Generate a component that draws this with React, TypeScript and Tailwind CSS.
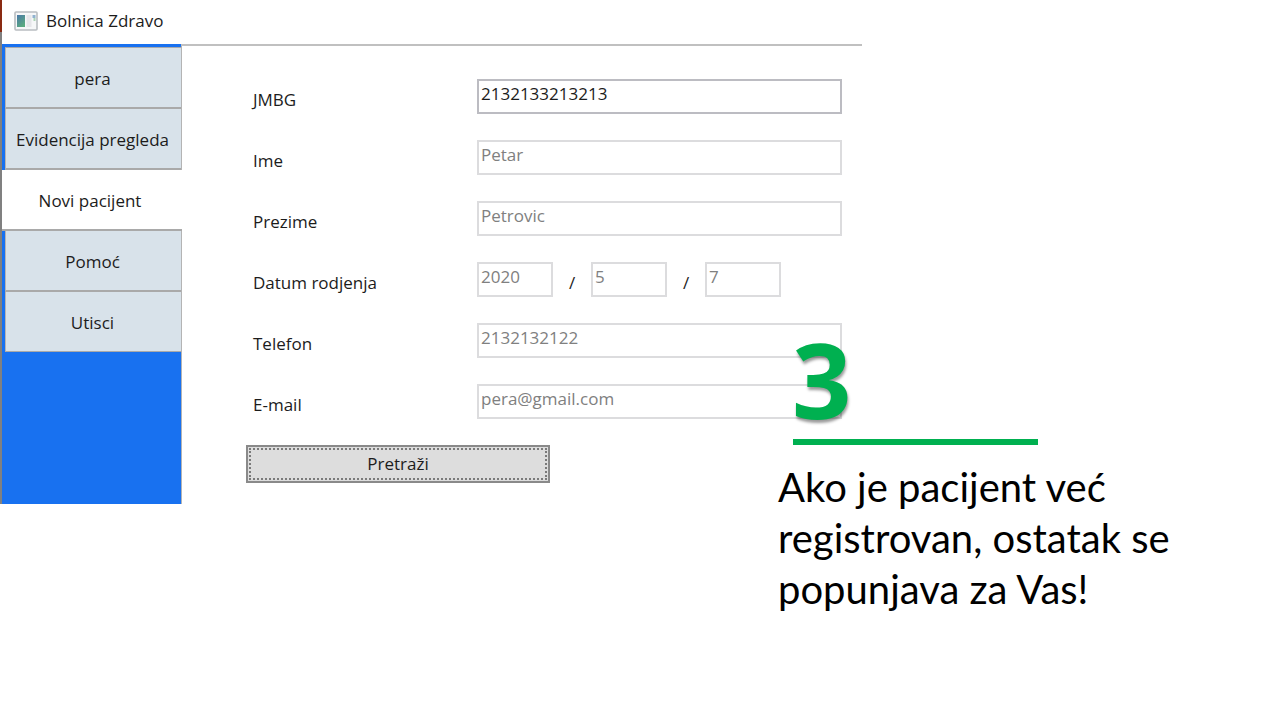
import type { ReactNode } from "react";
import clsx from "clsx";

const tabs = ["pera", "Evidencija pregleda", "Novi pacijent", "Pomoć", "Utisci"];
const activeTab = "Novi pacijent";

function WindowIcon() {
  return (
    <svg width="24" height="20" viewBox="0 0 24 20" aria-hidden="true">
      <defs>
        <linearGradient id="pane" x1="0" y1="0" x2="0.6" y2="1">
          <stop offset="0" stopColor="#4a78a8" />
          <stop offset="1" stopColor="#5aaa80" />
        </linearGradient>
      </defs>
      <rect x="1" y="1" width="22" height="18" rx="1" fill="#f6f7f8" stroke="#b9bdc1" strokeWidth="1.6" />
      <rect x="3" y="4" width="8" height="12" fill="url(#pane)" />
      <rect x="12.500" y="4" width="5" height="12" fill="#e6e6ea" />
      <rect x="18.500" y="4" width="3" height="3" fill="#8fb2cf" />
      <rect x="19.500" y="7" width="2" height="3" fill="#a9d3b4" />
    </svg>
  );
}

function Sidebar() {
  return (
    <nav className="flex w-[180px] shrink-0 flex-col border-r border-[#b4b4b4] bg-[#1871f0] pt-px">
      {tabs.map((tab) => (
        <button
          key={tab}
          type="button"
          className={clsx(
            "whitespace-nowrap border-[#a9a9a9] pt-[3px] leading-6 text-[#1c1c1c]",
            tab === activeTab ? "-mr-px bg-white pr-1" : "ml-[3px] border-l border-l-[#b9b5b0] bg-[#d8e2ea] pr-[2px]",
            tab === "pera" ? "h-[62px] border-t" : tab === "Utisci" ? "h-[60px]" : "h-[61px]",
            tab === "Utisci" ? "border-b" : "border-b-2",
          )}
        >
          {tab}
        </button>
      ))}
    </nav>
  );
}

function Row({ label, htmlFor, children }: { label: string; htmlFor: string; children: ReactNode }) {
  return (
    <div className="flex">
      <label htmlFor={htmlFor} className="w-[231px] shrink-0 pl-[7px] pt-[9px] leading-6">
        {label}
      </label>
      {children}
    </div>
  );
}

function TextBox({ id, value, label, disabled = true, small = false }: {
  id: string;
  value: string;
  label?: string;
  disabled?: boolean;
  small?: boolean;
}) {
  return (
    <input
      id={id}
      aria-label={label}
      defaultValue={value}
      disabled={disabled}
      className={clsx(
        "h-[35px] border-2 bg-white px-[2px] pb-[6px] leading-6",
        small ? "w-[76px]" : "min-w-0 flex-1",
        disabled ? "border-[#dcdcde] text-[#808080]" : "border-[#bcbcc2] text-[#1c1c1c]",
      )}
    />
  );
}

function Slash() {
  return <span className="w-[38px] pt-[9px] text-center leading-6">/</span>;
}

function PatientForm() {
  return (
    <form
      className="flex min-w-0 flex-1 flex-col gap-[26px] pb-[21px] pl-16 pr-5 pt-[33px]"
      onSubmit={(e) => e.preventDefault()}
    >
      <Row label="JMBG" htmlFor="jmbg">
        <TextBox id="jmbg" value="2132133213213" disabled={false} />
      </Row>
      <Row label="Ime" htmlFor="ime">
        <TextBox id="ime" value="Petar" />
      </Row>
      <Row label="Prezime" htmlFor="prezime">
        <TextBox id="prezime" value="Petrovic" />
      </Row>
      <Row label="Datum rodjenja" htmlFor="godina">
        <TextBox id="godina" value="2020" small />
        <Slash />
        <TextBox id="mesec" value="5" label="Mesec" small />
        <Slash />
        <TextBox id="dan" value="7" label="Dan" small />
      </Row>
      <Row label="Telefon" htmlFor="telefon">
        <TextBox id="telefon" value="2132132122" />
      </Row>
      <Row label="E-mail" htmlFor="email">
        <TextBox id="email" value="pera@gmail.com" />
      </Row>
      <button type="submit" className="h-[38px] w-[304px] border-2 border-[#8a8a8a] bg-[#dddddd] p-px">
        <span className="flex h-full items-center justify-center border-2 border-dotted border-[#7a7a7a]">
          Pretraži
        </span>
      </button>
    </form>
  );
}

export default function App() {
  return (
    <div className="grid min-h-screen grid-cols-[862fr_418fr] items-start bg-white">
      <div className="flex font-['Open_Sans','Noto_Sans',sans-serif] text-[17px] text-[#1c1c1c]">
        <div className="flex w-[2px] shrink-0 flex-col bg-[#808080]">
          <div className="h-8 bg-[#8a2a12]" />
        </div>
        <section className="min-w-0 flex-1">
          <header className="flex h-11 items-center gap-2 pb-[3px] pl-3">
            <WindowIcon />
            <h1 className="leading-6">Bolnica Zdravo</h1>
          </header>
          <div className="flex h-[2px] bg-[#c0c0c0]">
            <div className="w-[179px] bg-[#1871f0]" />
          </div>
          <div className="flex">
            <Sidebar />
            <PatientForm />
          </div>
        </section>
      </div>
      <aside className="relative z-10 -ml-[84px] pt-[323px] font-['Lato',sans-serif]">
        <p className="pb-1 pl-[14px] font-['Open_Sans',sans-serif] text-[104px] font-bold leading-[112px] text-[#00b050] [text-shadow:1px_3px_3px_rgba(0,0,0,0.4)]">
          3
        </p>
        <div className="ml-[15px] h-[6px] w-[245px] bg-[#00b050]" />
        <p className="pt-[17px] text-[40px] leading-[51px] text-black">
          Ako je pacijent već
          <br />
          registrovan, ostatak se
          <br />
          popunjava za Vas!
        </p>
      </aside>
    </div>
  );
}
